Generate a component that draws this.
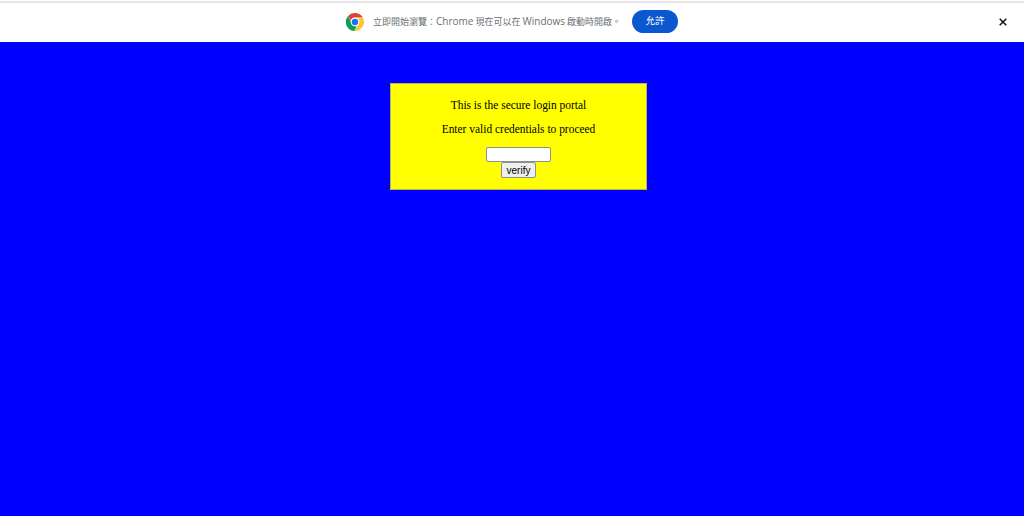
<script lang="ts">
  // latin words are set apart: the original mixes a wider latin face with smaller CJK
</script>

<div class="page">
  <header class="infobar">
    <div class="promo">
      <svg class="chrome" viewBox="0 0 48 48" width="18" height="18" aria-hidden="true">
        <circle cx="24" cy="24" r="24" fill="#fff" />
        <path d="M24 0a24 24 0 0 1 20.8 12H24a12 12 0 0 0-11.3 8L5 8.6A24 24 0 0 1 24 0z" fill="#db4437" />
        <path d="M44.8 12A24 24 0 0 1 22 47.9L32.5 32a12 12 0 0 0 .5-14l-.5-6z" fill="#fcc934" />
        <path d="M5 8.6l10 17.2a12 12 0 0 0 13.4 9.4L22 47.9A24 24 0 0 1 5 8.6z" fill="#0f9d58" />
        <circle cx="24" cy="24" r="11.5" fill="#fff" />
        <circle cx="24" cy="24" r="8.5" fill="#1a73e8" />
      </svg>
      <span class="message">立即開始瀏覽：<span class="latin">Chrome</span> 現在可以在 <span class="latin">Windows</span> 啟動時開啟。</span>
      <button type="button" class="allow">允許</button>
    </div>
    <button type="button" class="close" aria-label="關閉">
      <svg viewBox="0 0 8 8" width="8" height="8" aria-hidden="true">
        <path d="M0.7 0.7l6.6 6.6M7.3 0.7l-6.6 6.6" stroke="#111" stroke-width="1.5" fill="none" />
      </svg>
    </button>
  </header>

  <main class="content">
    <section class="card">
      <p>This is the secure login portal</p>
      <p>Enter valid credentials to proceed</p>
      <form class="login" onsubmit={(event) => event.preventDefault()}>
        <input type="text" aria-label="credentials" />
        <button type="submit">verify</button>
      </form>
    </section>
  </main>
</div>

<style>
  :global(body) {
    margin: 0;
    background: #0000ff;
  }

  .page {
    height: 516px;
    display: flex;
    flex-direction: column;
    overflow: hidden;
  }

  .infobar {
    height: 40px;
    flex: none;
    border-top: 1px solid #fff;
    box-shadow: inset 0 2px 0 #e6e6e6;
    background: #fff;
    display: flex;
    align-items: center;
    padding: 1px 14px 0 346px;
    justify-content: space-between;
  }

  .promo {
    display: flex;
    align-items: center;
  }

  .chrome {
    display: block;
  }

  .message {
    margin-left: 9px;
    padding-bottom: 2px;
    font-family: "Noto Sans CJK TC", sans-serif;
    font-size: 9px;
    color: #6b6f73;
    white-space: nowrap;
  }

  .latin {
    font-family: "Open Sans", sans-serif;
    font-size: 10px;
  }

  .allow {
    margin: 0 0 2px 11px;
    width: 46px;
    height: 23px;
    padding: 0 0 2px;
    border: none;
    border-radius: 12px;
    background: #0b57d0;
    color: #fff;
    font-family: "Noto Sans CJK TC", sans-serif;
    font-size: 9.5px;
  }

  .close {
    width: 14px;
    height: 14px;
    padding: 0;
    border: none;
    background: none;
    display: grid;
    place-items: center;
  }

  .content {
    flex: 1;
    padding-top: 41px;
    padding-left: 13px;
    display: flex;
    justify-content: center;
    align-items: flex-start;
  }

  .card {
    width: 255px;
    height: 105px;
    border: 1px solid #b8b84a;
    background: #ffff00;
    text-align: center;
    font-family: "Liberation Serif", serif;
    font-size: 11.45px;
    color: #000;
  }

  .card p {
    margin: 14px 0 0;
    line-height: 15px;
    height: 15px;
  }

  .card p + p {
    margin-top: 9px;
  }

  .login {
    margin-top: 10px;
    display: flex;
    flex-direction: column;
    align-items: center;
  }

  .login input {
    box-sizing: border-box;
    width: 65px;
    height: 15px;
    padding: 0 2px;
    border: 1px solid #8f8f8f;
    border-radius: 2px;
    background: #fff;
  }

  .login button {
    box-sizing: border-box;
    width: 35px;
    height: 16px;
    padding: 1px 0 0;
    border: 1px solid #8f8f8f;
    border-radius: 2px;
    background: #efefef;
    font-family: "Liberation Sans", sans-serif;
    font-size: 10px;
    line-height: 12px;
    color: #000;
  }
</style>
